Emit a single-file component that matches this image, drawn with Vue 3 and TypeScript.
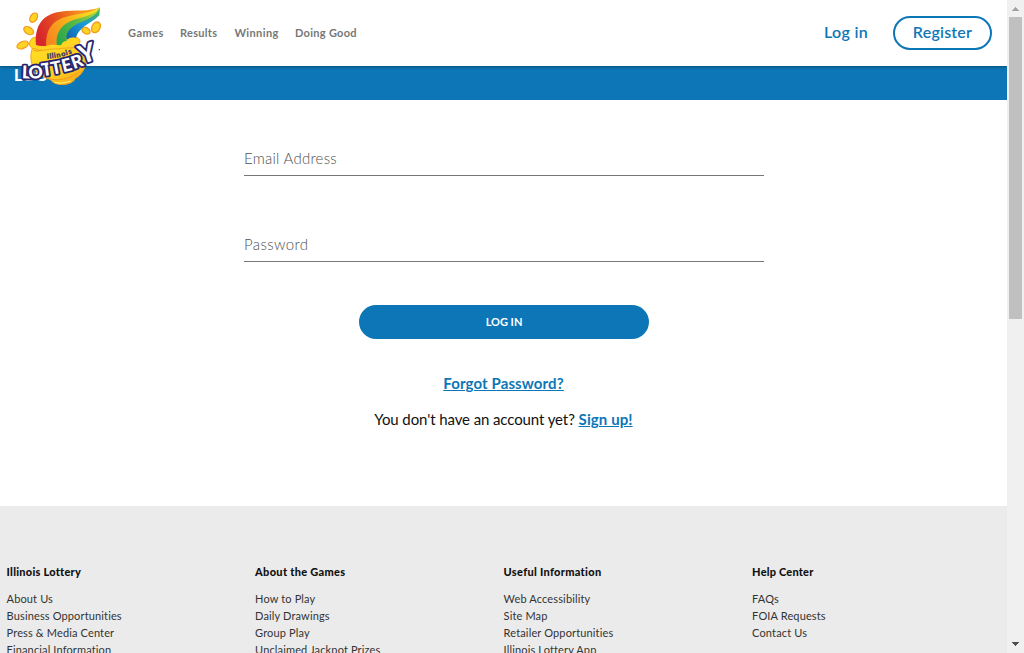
<script setup lang="ts">
interface LinkItem { label: string; cls: string }
interface FooterColumn { title: string; cls: string; links: LinkItem[] }

const nav: LinkItem[] = [
  { label: 'Games', cls: 'games' },
  { label: 'Results', cls: 'results' },
  { label: 'Winning', cls: 'winning' },
  { label: 'Doing Good', cls: 'good' },
]

const make = (labels: string[]): LinkItem[] => labels.map((label, i) => ({ label, cls: `row${i}` }))

const columns: FooterColumn[] = [
  { title: 'Illinois Lottery', cls: 'c0', links: make(['About Us', 'Business Opportunities', 'Press & Media Center', 'Financial Information']) },
  { title: 'About the Games', cls: 'c1', links: make(['How to Play', 'Daily Drawings', 'Group Play', 'Unclaimed Jackpot Prizes']) },
  { title: 'Useful Information', cls: 'c2', links: make(['Web Accessibility', 'Site Map', 'Retailer Opportunities', 'Illinois Lottery App']) },
  { title: 'Help Center', cls: 'c3', links: make(['FAQs', 'FOIA Requests', 'Contact Us']) },
]
</script>

<template>
  <div class="window">
    <div class="page">
      <header class="header">
        <svg class="logo" viewBox="0 0 360 300" aria-label="Illinois Lottery">
          <defs>
            <linearGradient id="body" x1="0" x2="1" y1="0" y2="1">
              <stop offset="0" stop-color="#ffdf24" />
              <stop offset=".6" stop-color="#ffcb1f" />
              <stop offset="1" stop-color="#f39a1c" />
            </linearGradient>
            <linearGradient id="red" gradientUnits="userSpaceOnUse" x1="115" x2="290" y1="100" y2="30">
              <stop offset="0" stop-color="#d7262c" /><stop offset=".35" stop-color="#e5501f" /><stop offset=".75" stop-color="#f6911c" /><stop offset="1" stop-color="#f9a51c" />
            </linearGradient>
            <linearGradient id="orange" gradientUnits="userSpaceOnUse" x1="145" x2="290" y1="110" y2="35">
              <stop offset="0" stop-color="#f58a1e" /><stop offset=".5" stop-color="#fbb51c" /><stop offset="1" stop-color="#f6e624" />
            </linearGradient>
            <linearGradient id="green" gradientUnits="userSpaceOnUse" x1="175" x2="290" y1="110" y2="40">
              <stop offset="0" stop-color="#2fa84a" /><stop offset=".5" stop-color="#58b947" /><stop offset="1" stop-color="#b5d334" />
            </linearGradient>
            <linearGradient id="blue" gradientUnits="userSpaceOnUse" x1="205" x2="298" y1="115" y2="35">
              <stop offset="0" stop-color="#1465b2" /><stop offset=".5" stop-color="#1a9ad6" /><stop offset="1" stop-color="#3eb565" />
            </linearGradient>
          </defs>
          <g fill="#ffd323" stroke="#f19b1d" stroke-width="4">
            <ellipse cx="101" cy="53" rx="10" ry="15" transform="rotate(32 101 53)" />
            <ellipse cx="86" cy="92" rx="10" ry="16" transform="rotate(-58 86 92)" />
            <ellipse cx="68" cy="135" rx="10" ry="18" transform="rotate(67 68 135)" />
            <ellipse cx="258" cy="92" rx="9" ry="13" transform="rotate(-60 258 92)" />
            <ellipse cx="288" cy="82" rx="12" ry="17" transform="rotate(28 288 82)" />
          </g>
          <path fill="url(#body)" stroke="#f3a11c" stroke-width="3" d="M98 143 C84 178 96 226 151 238 C162 261 218 258 226 235 C265 212 266 166 230 140 Z" />
          <path fill="#ffd522" stroke="#f4a51d" stroke-width="3" d="M94 118 C84 128 88 148 105 146 C126 158 151 144 175 147 C203 140 219 150 236 135 C245 123 238 110 222 112 C190 103 150 105 115 112 C103 110 97 113 94 118Z" />
          <path fill="url(#red)" d="M108 135 C103 75 130 42 180 35 C225 29 268 36 300 22 C279 40 251 42 218 50 C171 58 140 83 140 137 Q121 140 108 135Z" />
          <path fill="url(#orange)" d="M139 137 C136 82 164 56 210 47 C248 41 280 36 300 22 C287 45 259 52 234 60 C190 73 170 96 170 135 Q154 133 139 137Z" />
          <path fill="url(#green)" d="M170 135 C166 91 192 66 232 56 C264 49 287 40 300 22 C298 44 269 61 244 71 C213 84 198 99 200 123 Q188 123 183 136Z" />
          <path fill="url(#blue)" d="M200 119 C195 92 220 76 244 66 C273 54 290 43 300 23 L298 46 C285 60 267 68 253 79 C238 91 231 101 228 113 Q214 108 200 119Z" />
          <path fill="none" stroke="#f29a1b" stroke-width="3" d="M101 151 Q113 156 126 150 M148 237 Q190 247 232 220" />
          <path fill="none" stroke="#fff06b" stroke-width="4" d="M164 247 Q187 253 213 243" />
          <text class="state" x="141 149 156 163 170 185 199 207" y="177 176 175 174 173 170 166 163" rotate="-4 -6 -8 -9 -11 -14 -16 -18">Illinois</text>
          <text class="word" x="65 87 127 156 190 221 245" y="235 237 229 224 217 208 193" rotate="2 -5 -8 -11 -14 -20 -18">LOTTER<tspan class="tall">Y</tspan></text>
          <circle cx="298" cy="149" r="2" fill="#26256d" />
        </svg>
        <nav class="nav">
          <a v-for="item in nav" :key="item.label" :class="item.cls">{{ item.label }}</a>
        </nav>
        <div class="account">
          <a class="login">Log in</a>
          <a class="register"><span>Register</span></a>
        </div>
      </header>
      <div class="banner"><h1>LOG IN</h1></div>
      <main class="form">
        <label class="field"><span class="email">Email Address</span></label>
        <label class="field second"><span class="password">Password</span></label>
        <button type="button"><span>LOG IN</span></button>
        <p class="forgot"><a>Forgot Password?</a></p>
        <p class="signup"><span>You don't have an account yet?</span> <a>Sign up!</a></p>
      </main>
      <footer class="footer">
        <section v-for="col in columns" :key="col.title" :class="col.cls">
          <h2>{{ col.title }}</h2>
          <ul>
            <li v-for="link in col.links" :key="link.label"><a :class="link.cls">{{ link.label }}</a></li>
          </ul>
        </section>
      </footer>
    </div>
    <aside class="scrollbar">
      <svg viewBox="0 0 17 17" shape-rendering="crispEdges"><path fill="#a3a3a3" d="M8 7h1v1h1v1h1v1h1v1H5v-1h1V9h1V8h1z" /></svg>
      <div class="thumb"></div>
      <svg class="down" viewBox="0 0 17 17" shape-rendering="crispEdges"><path fill="#505050" d="M5 6h7v1h-1v1h-1v1H9v1H8V9H7V8H6V7H5z" /></svg>
    </aside>
  </div>
</template>

<style>
html, body { margin: 0; overflow: hidden; background: #fff; }
</style>
<style scoped>
.window { display: flex; width: 1024px; height: 653px; overflow: hidden; font-family: Lato, "Open Sans", sans-serif; }
.page { width: 1007px; height: 653px; overflow: hidden; }
.header { position: relative; z-index: 2; box-sizing: border-box; height: 66px; padding: 0 15px 0 128px; display: flex; align-items: center; justify-content: space-between; background: #fff; box-shadow: 0 1px 3px rgba(0, 0, 0, .35); }
.logo { position: absolute; left: 0; top: 0; width: 120px; height: 100px; }
.word { font: 900 53px Lato, sans-serif; fill: #fff; stroke: #26256d; stroke-width: 11px; paint-order: stroke; stroke-linejoin: round; }
.tall { font-size: 76px; }
.state { font: 900 22px Lato, sans-serif; fill: #38306a; stroke: #38306a; stroke-width: .7px; }
.nav { display: flex; gap: 16px; font-size: 11px; font-weight: 700; line-height: 16px; color: #777; letter-spacing: .3px; }
.nav a { white-space: nowrap; }
.games { width: 36px; letter-spacing: .48px; }
.results { width: 38.4px; }
.winning { width: 44.6px; letter-spacing: .4px; }
.good { width: 63px; }
.account { display: flex; align-items: center; gap: 25px; color: #0d76b7; font-size: 16px; font-weight: 600; white-space: nowrap; }
.login { width: 44px; letter-spacing: .3px; line-height: 20px; padding-bottom: 2px; }
.register { box-sizing: border-box; width: 99px; height: 34px; border: 2px solid #0d76b7; border-radius: 17px; line-height: 28px; text-align: center; letter-spacing: .2px; }
.banner { height: 34px; background: #0d76b7; overflow: hidden; }
h1 { margin: 0 0 0 14px; font-size: 16px; line-height: 18px; font-weight: 900; color: #fff; }
.form { box-sizing: border-box; height: 406px; padding-top: 42px; display: flex; flex-direction: column; align-items: center; }
.field { box-sizing: border-box; width: 520px; height: 34px; margin-left: 1px; border-bottom: 1px solid #777; font-size: 15px; line-height: 32px; color: #505050; font-weight: 300; letter-spacing: .25px; }
.password { letter-spacing: .4px; }
.second { margin-top: 52px; }
button { width: 290px; height: 34px; margin: 43px 0 0 1px; padding: 0 0 2px; border: 0; border-radius: 17px; background: #0d76b7; color: #fff; font: 700 11px Lato, sans-serif; }
p { margin: 0; font-size: 15px; line-height: 20px; white-space: nowrap; }
.forgot { margin-top: 34px; letter-spacing: .12px; }
.signup { margin-top: 16px; }
.signup span { color: #111; letter-spacing: -.1px; }
.signup a { letter-spacing: .1px; }
p a { color: #0d76b7; font-weight: 700; text-decoration: underline; }
.footer { box-sizing: border-box; height: 147px; padding: 57px 0 0 6.6px; display: grid; grid-template-columns: repeat(4, 248.5px); background: #ebebeb; overflow: hidden; font-size: 11px; }
.footer section { min-width: 0; }
h2 { margin: 0 0 10px; font-size: 11px; line-height: 17px; font-weight: 900; color: #111; letter-spacing: .3px; }
.c0 h2 { letter-spacing: .25px; }
.c3 h2 { letter-spacing: .2px; }
ul { list-style: none; margin: 0; padding: 0; color: #333; line-height: 17px; letter-spacing: .14px; }
li { height: 17px; }
.scrollbar { display: flex; flex-direction: column; width: 17px; height: 653px; background: #f0f0f0; }
.scrollbar svg { width: 17px; height: 17px; }
.thumb { width: 13px; height: 302px; margin-left: 2px; background: #c0c0c0; }
.scrollbar .down { margin-top: auto; }
</style>
